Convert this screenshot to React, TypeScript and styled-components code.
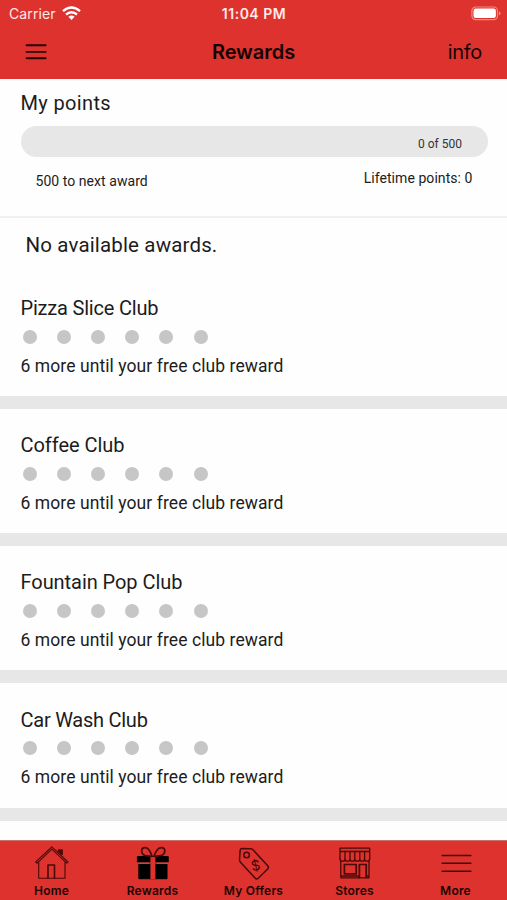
import React from "react";
import styled, { createGlobalStyle } from "styled-components";

const GlobalStyle = createGlobalStyle`
  * { box-sizing: border-box; }
  html, body { margin: 0; padding: 0; background: #fff; overflow: hidden; }
`;

const Screen = styled.div`
  width: 507px;
  height: 900px;
  display: flex;
  flex-direction: column;
  overflow: hidden;
  background: #fefefe;
  color: #1c1c1c;
  font-family: Roboto, sans-serif;
`;

const Header = styled.header`
  flex: none;
  height: 79px;
  background: #dd322d;
  font-family: Inter, sans-serif;
`;

const StatusBar = styled.div`
  height: 28px;
  display: grid;
  grid-template-columns: 1fr auto 1fr;
  align-items: center;
  padding: 0 6px 0 9px;
  color: #fde9e7;
  font-size: 14px;
  line-height: 28px;
`;

const Carrier = styled.div`
  display: flex;
  align-items: center;
  gap: 6px;
  letter-spacing: 0.1px;

  svg {
    margin-top: -2px;
  }
`;

const Clock = styled.div`
  margin-right: 2px;
  font-size: 14px;
  font-weight: 600;
  letter-spacing: 0.5px;
`;

const Battery = styled.svg`
  justify-self: end;
  margin-top: -1px;
`;

const NavBar = styled.div`
  height: 51px;
  display: grid;
  grid-template-columns: 1fr auto 1fr;
  align-items: center;
  padding: 0 25px 3px;
  color: #140202;
  line-height: 48px;
`;

const MenuIcon = styled.svg`
  display: block;
`;

const Title = styled.h1`
  margin: 0;
  font-size: 20px;
  font-weight: 600;
  letter-spacing: -0.05px;
  line-height: 48px;
`;

const InfoLink = styled.span`
  justify-self: end;
  font-size: 20px;
  letter-spacing: -0.3px;
`;

const Content = styled.main`
  flex: 1;
  min-height: 0;
  overflow: hidden;
`;

const Points = styled.section`
  height: 139px;
  padding: 12px 19.5px 0 20.5px;
  border-bottom: 2px solid #f0f0f0;
`;

const Heading = styled.h2<{ $spacing?: number }>`
  margin: 0;
  height: 24px;
  font-size: 20px;
  font-weight: 400;
  line-height: 24px;
  letter-spacing: ${(p) => p.$spacing ?? 0}px;
  white-space: nowrap;
`;

const Progress = styled.div`
  margin-top: 10.5px;
  height: 31.5px;
  border-radius: 16px;
  background: #e7e7e7;
  padding: 2.5px 25.5px 0 0;
  text-align: right;
  font-size: 12px;
  line-height: 32px;
  color: #333;
`;

const PointsFooter = styled.div`
  display: flex;
  justify-content: space-between;
  align-items: flex-start;
  padding: 11px 15px 0 15px;
  font-size: 14px;
  line-height: 20px;
`;

const NextAward = styled.span`
  margin-top: 3px;
  letter-spacing: 0.05px;
`;

const Lifetime = styled.span`
  letter-spacing: 0.06px;
`;

const Empty = styled.p`
  margin: 0;
  height: 53.8px;
  padding: 15px 0 0 25.5px;
  font-size: 20.5px;
  line-height: 24px;
  letter-spacing: 0.15px;
`;

const Card = styled.article`
  height: 137.2px;
  padding: 24.2px 20.5px 0;
  border-bottom: 13.2px solid #e7e7e7;
`;

const Dots = styled.div`
  display: flex;
  gap: 20.2px;
  padding: 9.7px 0 0 2.2px;
`;

const Dot = styled.span`
  width: 14px;
  height: 14px;
  border-radius: 50%;
  background: #c6c6c6;
`;

const Remaining = styled.p`
  margin: 12.2px 0 0;
  font-size: 17.5px;
  line-height: 20px;
  letter-spacing: 0.08px;
  white-space: nowrap;
`;

const TabBar = styled.nav`
  flex: none;
  height: 60px;
  display: grid;
  grid-template-columns: repeat(5, 1fr);
  padding: 0 1px;
  background: #dd322d;
  color: #210403;
  border-top: 1px solid #c9716c;
`;

const Tab = styled.div`
  display: flex;
  flex-direction: column;
  align-items: center;
  padding-top: 4px;
  font-family: Inter, sans-serif;
  font-size: 12px;
  font-weight: 600;
  line-height: 16px;
  letter-spacing: 0.2px;
  white-space: nowrap;
`;

const TabIcon = styled.svg`
  display: block;
  width: 36px;
  height: 36px;
  margin-bottom: 2px;
  fill: none;
  stroke: #4a0a08;
  stroke-width: 1.3;
  stroke-linejoin: round;
  stroke-linecap: round;
`;

const Currency = styled.text`
  font: 400 14px Inter, sans-serif;
  fill: #3c0806;
  stroke: none;
`;

const HomeIcon = () => (
  <TabIcon viewBox="0 0 36 36">
    <path d="M4.7 17.5V33.3H31V17.5M1.7 17L17.8 1.9 34 17 32.6 18.2 17.8 4.2 3.2 18.2Z" strokeWidth="1.1" />
    <path d="M14 33V20H20.5V33" strokeWidth="1.6" />
    <path d="M24.3 5H28.2V9.4L24.3 6.2Z" fill="#4a0a08" />
  </TabIcon>
);

const GiftIcon = () => (
  <TabIcon viewBox="0 0 36 36">
    <path d="M2.8 11.5H33.2V17H2.8ZM4.2 19H32V33.7H4.2Z" fill="#000" stroke="#000" strokeWidth="1" />
    <path d="M4 18.2H14.3M21.7 18.2H32.3" stroke="#e8605a" strokeWidth="1" />
    <path d="M15.4 11.8H20.4V34H15.4Z" fill="#dd322d" stroke="none" />
    <path d="M17 11.3C12.5 10.8 7 11.5 6.6 6.3 6.4 1.8 12 1.5 14.2 5.3 15.8 7.7 16.5 9.5 17 11.3M19 11.3C23.5 10.8 29.4 11.5 29.8 6.3 30 1.8 24.5 1.5 22 5.3 20.3 7.7 19.5 9.5 19 11.3" strokeWidth="1.7" />
  </TabIcon>
);

const TagIcon = () => (
  <TabIcon viewBox="0 0 36 36">
    <path d="M4.2 4.8Q4.4 3.4 6 3.4L14.8 3.7Q16.3 3.8 17.2 4.9L31.7 20.8Q33.2 22.5 31.7 24L22.2 33.2Q20.5 34.7 19 33L4.5 17.3Q3.5 16.2 3.5 14.8Z" strokeWidth="1.5" />
    <circle cx="10.6" cy="10" r="2.8" strokeWidth="1.5" />
    <Currency x="15" y="25.5" transform="rotate(-12 19.5 20.5)">$</Currency>
  </TabIcon>
);

const StoreIcon = () => (
  <TabIcon viewBox="0 0 36 36">
    <path d="M3 3.2H32.7V6.5H3ZM3 6.5V14M32.7 6.5V14M3.8 16V32.8H32V16M3.8 31H22M30 31H32" />
    <path d="M3 14q0 2.2 2.5 2.2t2.5-2.2q0 2.2 2.5 2.2t2.5-2.2q0 2.2 2.4 2.2t2.4-2.2q0 2.2 2.5 2.2t2.5-2.2q0 2.2 2.4 2.2t2.4-2.2q0 2.2 2.5 2.2t2.5-2.2M8 14V6.5M13 14V6.5M17.8 14V6.5M22.8 14V6.5M27.6 14V6.5" />
    <path d="M7.4 19.5H19.2V28.8H7.4ZM22.4 32.5V19.5H29.2V32.5" strokeWidth="1.7" />
  </TabIcon>
);

const MoreIcon = () => (
  <TabIcon viewBox="0 0 36 36">
    <path d="M4.2 10.5H32.8M4.2 18.3H32.8M4.2 26.2H32.8" stroke="#3c0806" strokeWidth="1.5" />
  </TabIcon>
);

const clubs = [
  { name: "Pizza Slice Club", spacing: -0.2 },
  { name: "Coffee Club", spacing: -0.05 },
  { name: "Fountain Pop Club", spacing: -0.06 },
  { name: "Car Wash Club", spacing: -0.25 },
];

const tabs = [
  { label: "Home", Icon: HomeIcon },
  { label: "Rewards", Icon: GiftIcon },
  { label: "My Offers", Icon: TagIcon },
  { label: "Stores", Icon: StoreIcon },
  { label: "More", Icon: MoreIcon },
];

export default function App() {
  return (
    <Screen>
      <GlobalStyle />
      <Header>
        <StatusBar>
          <Carrier>
            Carrier
            <svg width="19" height="15" viewBox="0 0 19 15" fill="none" stroke="#fff" strokeWidth="2.4">
              <path d="M1 5.2Q9.5-2 18 5.2M4 8.5Q9.5 4 15 8.5" />
              <path d="M6.4 10.8Q9.5 8.2 12.6 10.8L9.5 14Z" fill="#fff" stroke="none" />
            </svg>
          </Carrier>
          <Clock>11:04 PM</Clock>
          <Battery width="30" height="15" viewBox="0 0 30 15">
            <rect x=".9" y="1" width="25.6" height="12.6" rx="3.8" fill="none" stroke="#f08e88" strokeWidth="1.2" />
            <rect x="2.5" y="2.6" width="22.4" height="9.4" rx="2.3" fill="#fff" />
            <path d="M28 5.2Q29.6 6 29.6 7.3T28 9.4Z" fill="#f08e88" />
          </Battery>
        </StatusBar>
        <NavBar>
          <MenuIcon width="22" height="18" viewBox="0 0 22 18" stroke="#250403" strokeWidth="1.9" strokeLinecap="round">
            <path d="M1.6 2.3H20.6M1.6 8.9H20.6M1.6 15.3H20.6" />
          </MenuIcon>
          <Title>Rewards</Title>
          <InfoLink>info</InfoLink>
        </NavBar>
      </Header>
      <Content>
        <Points>
          <Heading $spacing={0.35}>My points</Heading>
          <Progress>0 of 500</Progress>
          <PointsFooter>
            <NextAward>500 to next award</NextAward>
            <Lifetime>Lifetime points: 0</Lifetime>
          </PointsFooter>
        </Points>
        <Empty>No available awards.</Empty>
        {clubs.map(({ name, spacing }) => (
          <Card key={name}>
            <Heading $spacing={spacing}>{name}</Heading>
            <Dots>
              {Array.from({ length: 6 }, (_, i) => (
                <Dot key={i} />
              ))}
            </Dots>
            <Remaining>6 more until your free club reward</Remaining>
          </Card>
        ))}
      </Content>
      <TabBar>
        {tabs.map(({ label, Icon }) => (
          <Tab key={label}>
            <Icon />
            {label}
          </Tab>
        ))}
      </TabBar>
    </Screen>
  );
}
